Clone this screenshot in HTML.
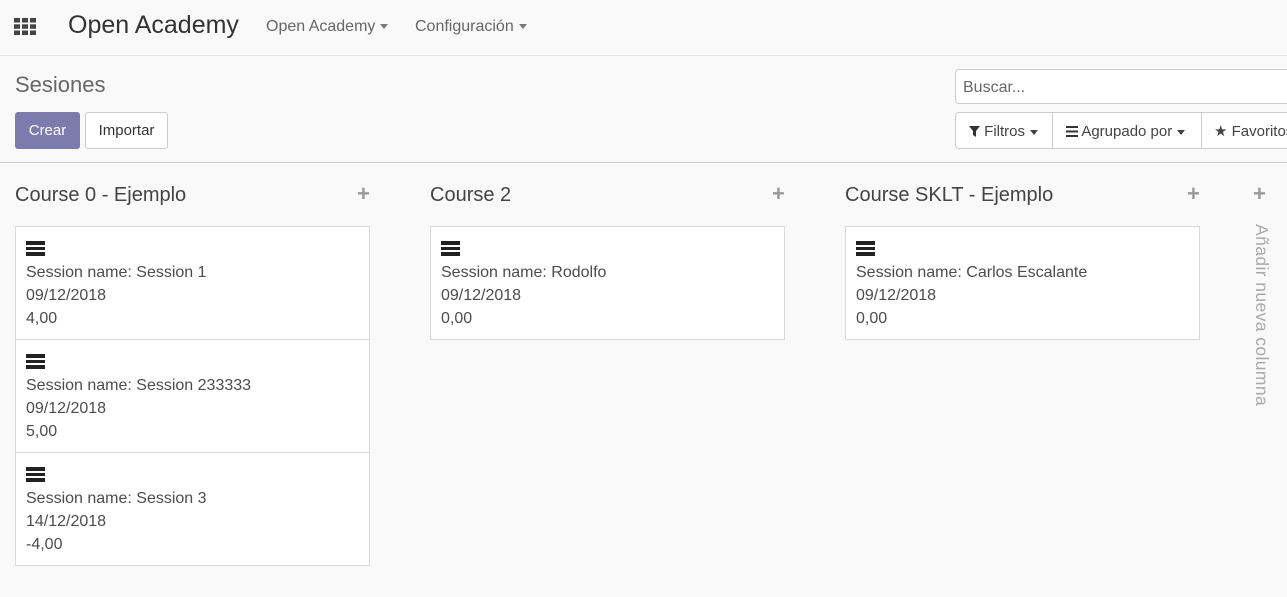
<!DOCTYPE html>
<html><head><meta charset="utf-8"><style>
*{box-sizing:border-box;margin:0;padding:0}
body{width:1287px;height:597px;overflow:hidden;background:#f9f9f9;font-family:"Liberation Sans",sans-serif;color:#4c4c4c;position:relative}
.a{position:absolute}
.nav{left:0;top:0;width:1287px;height:56px;border-bottom:1px solid #e2e2e2;background:#f9f9f9}
.caret{display:inline-block;border-left:4px solid transparent;border-right:4px solid transparent;border-top:5px solid #777;vertical-align:middle;margin-left:5px}
.btn{height:37px;border-radius:3px;font-size:15px;line-height:37px;text-align:center}
.card{position:absolute;width:355px;height:114px;background:#fff;border:1px solid #d9d9d9}
.card .hb{position:absolute;left:10px;top:14px;width:19px;height:14px}
.card .hb i{display:block;height:3.5px;background:#222;margin-bottom:2px}
.card .t{position:absolute;left:10px;top:34px;font-size:16px;line-height:23px;color:#4c4c4c}
.h{font-size:20px;color:#444;top:184px}
.plus{font-size:22px;color:#999;font-weight:bold;top:181px}
</style></head><body>
<div class="a nav"></div>
<svg class="a" style="left:14px;top:18px" width="22" height="17"><g fill="#444"><rect x="0" y="0" width="6" height="4.5"/><rect x="8" y="0" width="6" height="4.5"/><rect x="16" y="0" width="6" height="4.5"/><rect x="0" y="6.3" width="6" height="4.5"/><rect x="8" y="6.3" width="6" height="4.5"/><rect x="16" y="6.3" width="6" height="4.5"/><rect x="0" y="12.5" width="6" height="4.5"/><rect x="8" y="12.5" width="6" height="4.5"/><rect x="16" y="12.5" width="6" height="4.5"/></g></svg>
<div class="a" style="left:68px;top:11px;font-size:25px;color:#333">Open Academy</div>
<div class="a" style="left:266px;top:18px;font-size:16px;color:#666">Open Academy<span class="caret"></span></div>
<div class="a" style="left:415px;top:18px;font-size:16px;color:#666">Configuración<span class="caret"></span></div>
<div class="a" style="left:15px;top:72px;font-size:22px;color:#666">Sesiones</div>
<div class="a btn" style="left:15px;top:112px;width:65px;background:#7c7bad;color:#fff">Crear</div>
<div class="a btn" style="left:85px;top:112px;width:83px;background:#fff;border:1px solid #ccc;color:#333;line-height:35px">Importar</div>
<div class="a" style="left:955px;top:69px;width:340px;height:35px;background:#fff;border:1px solid #ccc;border-radius:4px;font-size:16px;color:#666;padding:9px 0 0 7px">Buscar...</div>
<div class="a" style="left:955px;top:112px;width:340px;height:37px;background:#fff;border:1px solid #ccc;border-radius:4px;font-size:15px;color:#444;line-height:37px">
<span class="a" style="left:13px;top:0"><svg width="11" height="11" style="vertical-align:-1px"><path d="M0 0H11L7 5V11L4 9V5Z" fill="#333"/></svg> Filtros<span class="caret" style="border-top-color:#444"></span></span>
<span class="a" style="left:96px;top:0;height:35px;border-left:1px solid #ccc"></span>
<span class="a" style="left:110px;top:0"><svg width="12" height="11" style="vertical-align:-1px"><g fill="#333"><rect y="0" width="12" height="2"/><rect y="4.5" width="12" height="2"/><rect y="9" width="12" height="2"/></g></svg> Agrupado por<span class="caret" style="border-top-color:#444"></span></span>
<span class="a" style="left:245px;top:0;height:35px;border-left:1px solid #ccc"></span>
<span class="a" style="left:258px;top:0">&#9733; Favoritos</span>
</div>
<div class="a" style="left:0;top:162px;width:1287px;border-top:1px solid #ccc"></div>

<div class="a h" style="left:15px">Course 0 - Ejemplo</div><div class="a plus" style="left:357px">+</div>
<div class="a h" style="left:430px">Course 2</div><div class="a plus" style="left:772px">+</div>
<div class="a h" style="left:845px">Course SKLT - Ejemplo</div><div class="a plus" style="left:1187px">+</div>
<div class="a plus" style="left:1253px">+</div>
<div class="a" style="left:1250px;top:224px;width:22px;height:200px;writing-mode:vertical-rl;font-size:17.5px;letter-spacing:0.4px;color:#aaa">Añadir nueva columna</div>

<div class="card" style="left:15px;top:226px"><div class="hb"><i></i><i></i><i></i></div><div class="t">Session name: Session 1<br>09/12/2018<br>4,00</div></div>
<div class="card" style="left:15px;top:339px"><div class="hb"><i></i><i></i><i></i></div><div class="t">Session name: Session 233333<br>09/12/2018<br>5,00</div></div>
<div class="card" style="left:15px;top:452px"><div class="hb"><i></i><i></i><i></i></div><div class="t">Session name: Session 3<br>14/12/2018<br>-4,00</div></div>
<div class="card" style="left:430px;top:226px"><div class="hb"><i></i><i></i><i></i></div><div class="t">Session name: Rodolfo<br>09/12/2018<br>0,00</div></div>
<div class="card" style="left:845px;top:226px"><div class="hb"><i></i><i></i><i></i></div><div class="t">Session name: Carlos Escalante<br>09/12/2018<br>0,00</div></div>
</body></html>
